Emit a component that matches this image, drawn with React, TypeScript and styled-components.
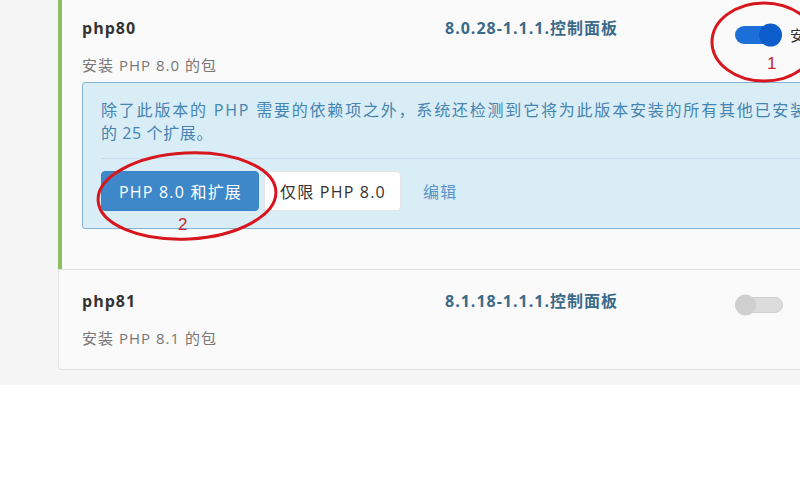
import React from "react";
import styled, { createGlobalStyle } from "styled-components";

const GlobalStyle = createGlobalStyle`
  html, body {
    margin: 0;
    padding: 0;
    background: #ffffff;
  }
  body {
    font-family: "Open Sans", "Noto Sans CJK SC", sans-serif;
  }
`;

interface Pkg {
  name: string;
  version: string;
  summary: string;
  installed: boolean;
}

const packages: Pkg[] = [
  {
    name: "php80",
    version: "8.0.28-1.1.1.控制面板",
    summary: "安装 PHP 8.0 的包",
    installed: true,
  },
  {
    name: "php81",
    version: "8.1.18-1.1.1.控制面板",
    summary: "安装 PHP 8.1 的包",
    installed: false,
  },
];

const App = () => {
  return (
    <Page>
      <GlobalStyle />
      <List>
        {packages.map((pkg) => (
          <Card key={pkg.name} $active={pkg.installed}>
            <Row>
              <div>
                <Name>{pkg.name}</Name>
                <Summary>{pkg.summary}</Summary>
              </div>
              <Version>{pkg.version}</Version>
              <ToggleCell>
                <Toggle $on={pkg.installed}>
                  <Knob $on={pkg.installed} />
                </Toggle>
                {pkg.installed && <ToggleLabel>安装</ToggleLabel>}
              </ToggleCell>
            </Row>
            {pkg.installed && (
              <Alert>
                <AlertLine $spread>
                  除了此版本的 PHP 需要的依赖项之外，系统还检测到它将为此版本安装的所有其他已安装
                </AlertLine>
                <AlertLine>的 25 个扩展。</AlertLine>
                <Divider />
                <Actions>
                  <Button $primary>PHP 8.0 和扩展</Button>
                  <Button>仅限 PHP 8.0</Button>
                  <EditLink>编辑</EditLink>
                </Actions>
              </Alert>
            )}
          </Card>
        ))}
      </List>
      <Marks viewBox="0 0 800 500" width={800} height={500}>
        <ellipse
          cx={764}
          cy={42}
          rx={52}
          ry={39}
          fill="none"
          stroke="#d7161e"
          strokeWidth={3}
        />
        <text x={767} y={69} fill="#c82530" fontSize={17} fontFamily="Liberation Sans, sans-serif">
          1
        </text>
        <ellipse
          cx={187}
          cy={196}
          rx={89}
          ry={43}
          fill="none"
          stroke="#d7161e"
          strokeWidth={3}
          transform="rotate(-3 187 196)"
        />
        <text x={178} y={230} fill="#c82530" fontSize={17} fontFamily="Liberation Sans, sans-serif">
          2
        </text>
      </Marks>
    </Page>
  );
};

export default App;

const Page = styled.div`
  position: relative;
  width: 800px;
  height: 500px;
  overflow: hidden;
  background: #ffffff;
`;

const List = styled.div`
  width: 1000px;
  padding: 0 0 15px 58px;
  background: #f5f5f5;
`;

const Card = styled.div<{ $active?: boolean }>`
  background: #fafafa;
  border-left: ${({ $active }) => ($active ? "4px solid #8cbf63" : "1px solid #e2e2e2")};
  border-top: ${({ $active }) => ($active ? "none" : "1px solid #e2e2e2")};
  border-bottom: ${({ $active }) => ($active ? "none" : "1px solid #e2e2e2")};
  border-bottom-left-radius: ${({ $active }) => ($active ? "0" : "4px")};
  padding: ${({ $active }) => ($active ? "17px 0 40px 20px" : "20px 0 20px 23px")};
`;

const Row = styled.div`
  display: grid;
  grid-template-columns: 363px 290px auto;
  align-items: start;
`;

const Name = styled.div`
  font-size: 16px;
  line-height: 22px;
  font-weight: 700;
  letter-spacing: 1px;
  color: #333333;
`;

const Summary = styled.div`
  margin-top: 15px;
  font-size: 15px;
  line-height: 22px;
  letter-spacing: 1px;
  color: #777777;
`;

const Version = styled.div`
  font-size: 16px;
  line-height: 22px;
  font-weight: 700;
  letter-spacing: 1px;
  color: #3b6a89;
`;

const ToggleCell = styled.div`
  display: flex;
  align-items: center;
  gap: 8px;
  margin-top: 7px;
`;

const Toggle = styled.div<{ $on?: boolean }>`
  position: relative;
  width: 46px;
  height: ${({ $on }) => ($on ? "18px" : "14px")};
  border-radius: 9px;
  background: ${({ $on }) => ($on ? "#1c6fd8" : "#dcdcdc")};
  border: ${({ $on }) => ($on ? "none" : "1px solid #cfcfcf")};
`;

const Knob = styled.span<{ $on?: boolean }>`
  position: absolute;
  top: 50%;
  width: ${({ $on }) => ($on ? "23px" : "21px")};
  height: ${({ $on }) => ($on ? "23px" : "21px")};
  border-radius: 50%;
  transform: translateY(-50%);
  background: ${({ $on }) => ($on ? "#0c5ccb" : "#cfcfcf")};
  ${({ $on }) => ($on ? "right: -1px;" : "left: -1px;")}
`;

const ToggleLabel = styled.span`
  font-size: 15px;
  color: #333333;
  margin-left: 1px;
`;

const Alert = styled.div`
  margin-top: 6px;
  padding: 16px 18px 17px;
  background: #d9edf7;
  border: 1px solid #86b3d3;
  border-radius: 3px;
`;

const AlertLine = styled.div<{ $spread?: boolean }>`
  font-size: 16px;
  line-height: 23px;
  white-space: nowrap;
  letter-spacing: ${({ $spread }) => ($spread ? "1.8px" : "0.6px")};
  color: #4583b1;
`;

const Divider = styled.div`
  height: 1px;
  margin: 13px 0 12px;
  background: #c4dced;
`;

const Actions = styled.div`
  display: flex;
  align-items: center;
  gap: 5px;
`;

const Button = styled.button<{ $primary?: boolean }>`
  height: 40px;
  padding: ${({ $primary }) => ($primary ? "0 16px 0 17px" : "0 14px 0 15px")};
  border-radius: 4px;
  border: 1px solid ${({ $primary }) => ($primary ? "#3a82c4" : "#e4e4e4")};
  background: ${({ $primary }) => ($primary ? "#3e88ca" : "#ffffff")};
  color: ${({ $primary }) => ($primary ? "#ffffff" : "#333333")};
  font-family: "Open Sans", "Noto Sans CJK SC", sans-serif;
  font-size: 16px;
  letter-spacing: 1.2px;
  cursor: pointer;
`;

const EditLink = styled.a`
  margin-left: 17px;
  font-size: 16px;
  letter-spacing: 1.2px;
  color: #5a93c6;
  cursor: pointer;
`;

const Marks = styled.svg`
  position: absolute;
  top: 0;
  left: 0;
  pointer-events: none;
`;
